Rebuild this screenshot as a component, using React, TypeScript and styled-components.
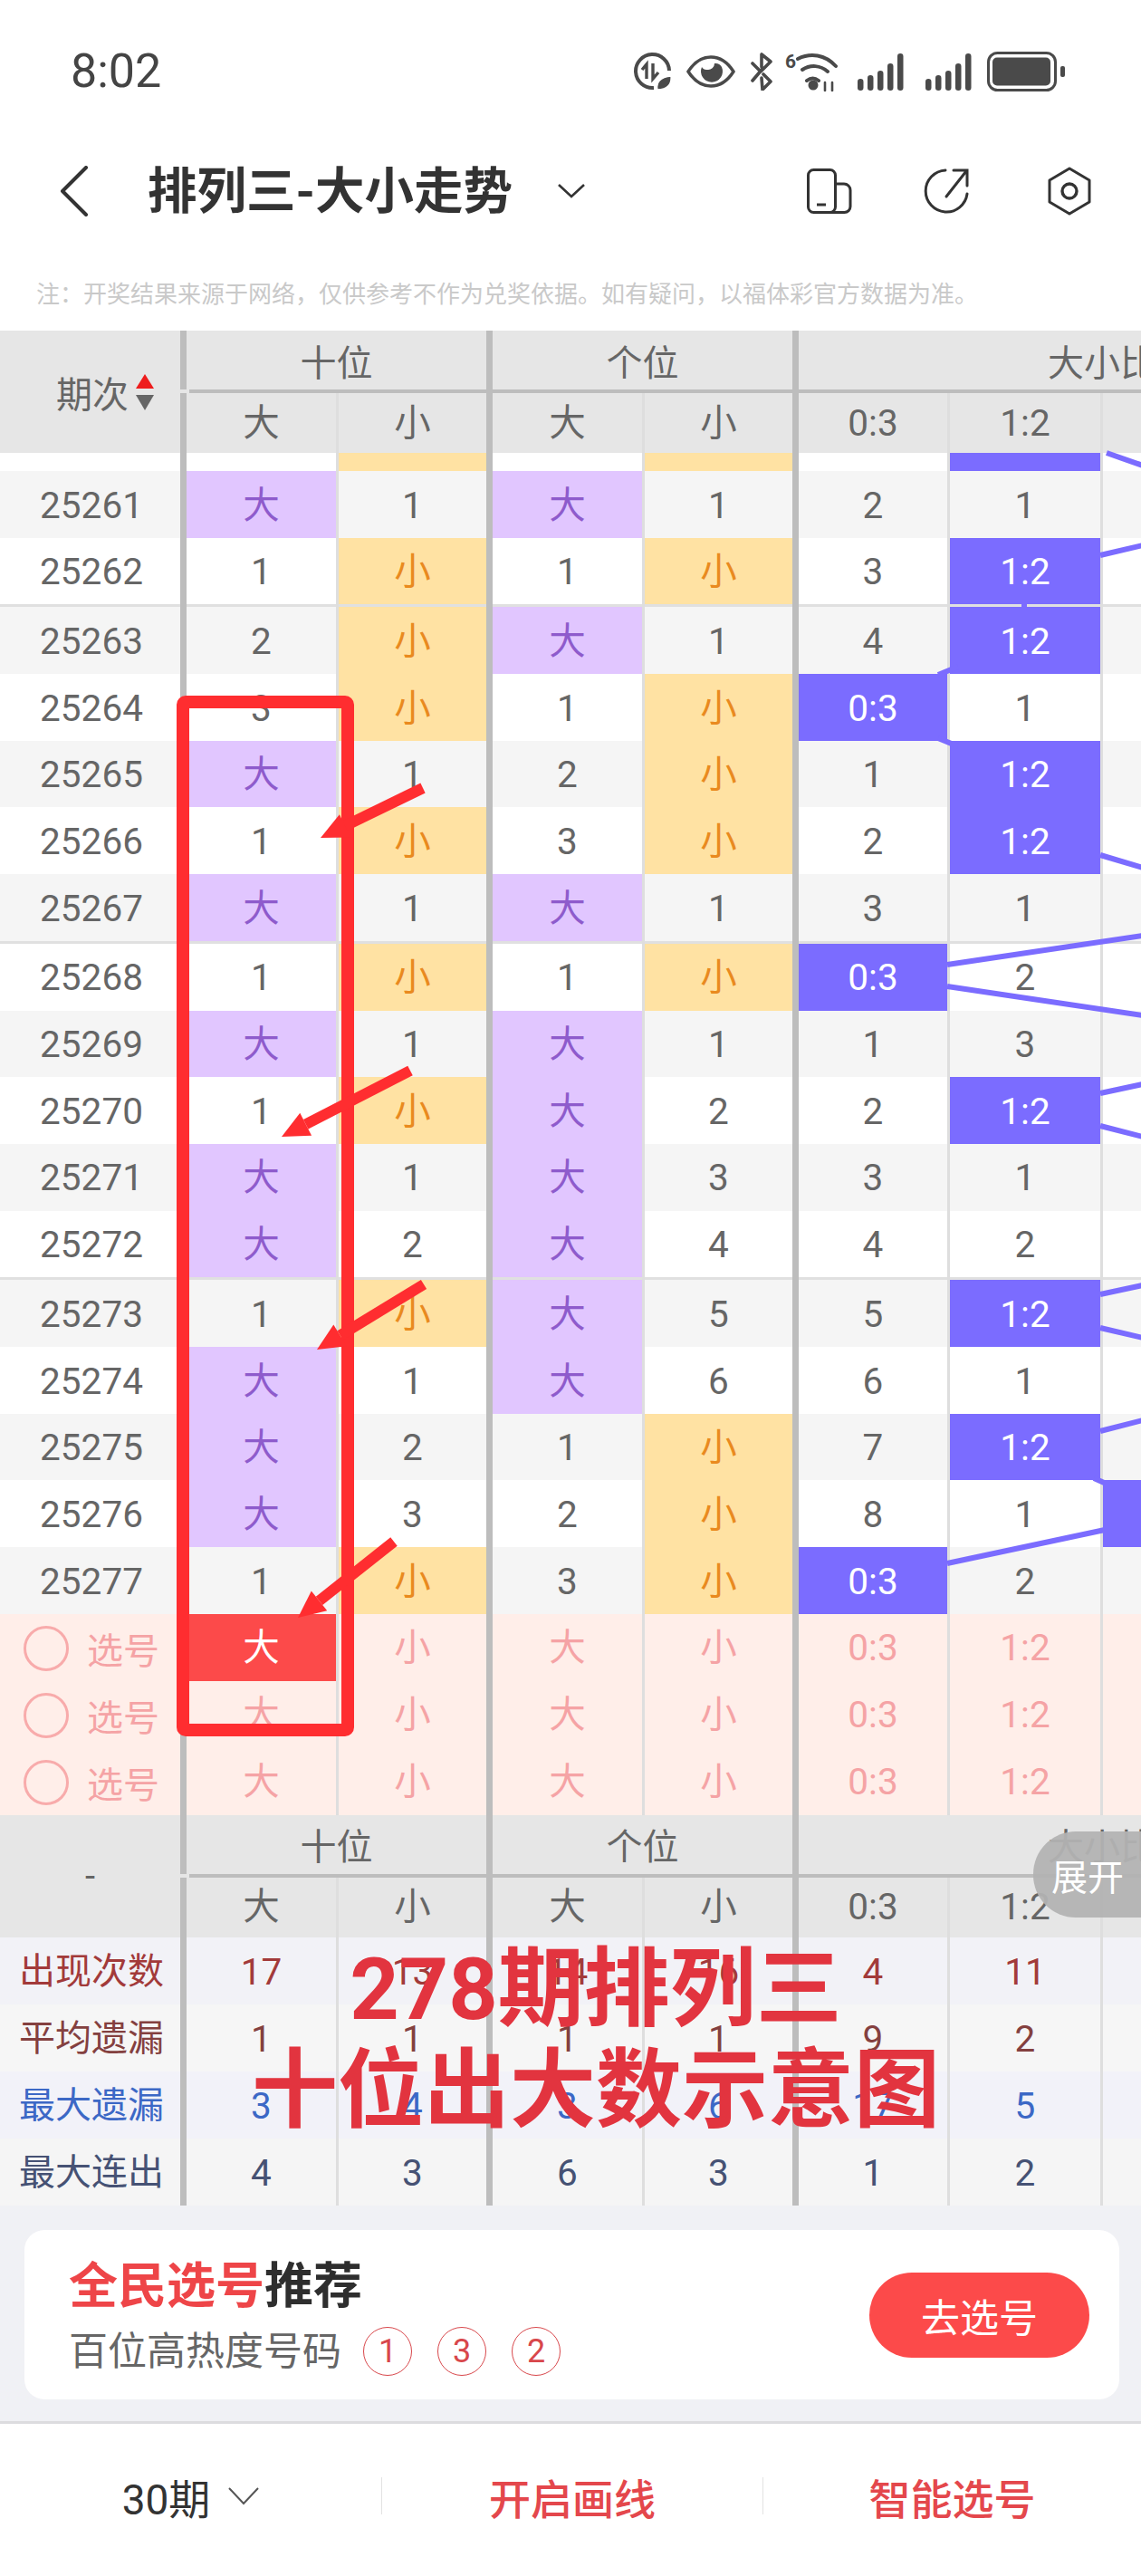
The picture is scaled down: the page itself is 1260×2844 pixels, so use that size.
import styled, { createGlobalStyle } from 'styled-components';

const FONT = 'Roboto, "Noto Sans CJK SC", sans-serif';
const COLUMNS = '172px 166px 172px 166px 171px 169px 45px';
const NOTE = '注\uFF1A开奖结果来源于网络\uFF0C仅供参考不作为兑奖依据。如有疑问\uFF0C以福体彩官方数据为准。';

const GlobalStyle = createGlobalStyle`
    html, body {
        margin: 0;
        padding: 0;
        background: #fff;
        font-family: ${FONT};
    }
`;

const Page = styled.div`
    position: relative;
    width: 1260px;
    height: 2844px;
    overflow: hidden;
    background: #fff;
    color: #666;
`;

const StatusBar = styled.div`
    height: 158px;
    display: flex;
    align-items: center;
    padding: 0 84px 0 78px;
    box-sizing: border-box;
    color: #444;
`;

const Clock = styled.div`
    font-size: 52px;
    line-height: 1;
    flex: 1;
`;

const StatusIcons = styled.div`
    display: flex;
    align-items: center;
`;

const NavBar = styled.div`
    height: 106px;
    display: flex;
    align-items: center;
    padding: 0 54px 0 66px;
    box-sizing: border-box;
    color: #333;
`;

const Title = styled.div`
    margin-left: 65px;
    font-size: 54.5px;
    font-weight: 700;
    line-height: 1;
`;

const NavIcons = styled.div`
    margin-left: auto;
    display: flex;
    align-items: center;
    gap: 79px;
    & > svg:last-child {
        margin-left: 7px;
    }
`;

const Note = styled.div`
    height: 101px;
    padding: 42px 0 0 40px;
    box-sizing: border-box;
    font-size: 26px;
    line-height: 38px;
    color: #c9c9c9;
    white-space: nowrap;
`;

const Head = styled.div`
    display: flex;
    background: #e6e6e6;
    color: #666;
    font-size: 40px;
`;

const HeadName = styled.div<{ $sort?: boolean }>`
    width: 199px;
    flex: none;
    display: flex;
    align-items: center;
    justify-content: ${({ $sort }) => ($sort ? 'flex-start' : 'center')};
    gap: 8px;
    padding-left: ${({ $sort }) => ($sort ? 62 : 0)}px;
    box-sizing: border-box;
`;

const HeadBody = styled.div`
    flex: 1;
    min-width: 0;
`;

const HeadGrid = styled.div<{ $height: number }>`
    display: grid;
    grid-template-columns: ${COLUMNS};
    height: ${({ $height }) => $height}px;
`;

const GroupCell = styled.div<{ $span: number; $pad?: number }>`
    grid-column: span ${({ $span }) => $span};
    border-left: 7px solid #bdbdbd;
    display: flex;
    align-items: center;
    justify-content: ${({ $pad }) => ($pad ? 'flex-start' : 'center')};
    padding-left: ${({ $pad }) => $pad ?? 0}px;
    white-space: nowrap;
    overflow: hidden;
`;

const GroupRule = styled.div`
    height: 4px;
    margin-left: 10px;
    background: #bdbdbd;
`;

const SortIcon = styled.svg`
    width: 20px;
    height: 40px;
    flex: none;
`;

const Row = styled.div<{ $height: number; $bg: string }>`
    display: grid;
    grid-template-columns: 199px ${COLUMNS};
    height: ${({ $height }) => $height}px;
    background: ${({ $bg }) => $bg};
    overflow: hidden;
    & > div {
        padding-top: 2px;
    }
`;

const TONES: Record<string, string> = {
    big: 'background: #e1c6ff; color: #8e5bcc;',
    small: 'background: #ffe2a3; color: #e98a1f;',
    ratio: 'background: #7b6cff; color: #fff;',
    picked: 'background: #fc4a4a; color: #fff;',
    rule: 'background: #e0e0e0;',
    plain: '',
};

const Cell = styled.div<{ $thick: boolean; $tone?: string; $color?: string }>`
    border-left: ${({ $thick }) => ($thick ? '7px solid #bdbdbd' : '3px solid #dedede')};
    display: flex;
    align-items: center;
    justify-content: center;
    font-size: 40.5px;
    line-height: 1;
    min-width: 0;
    color: ${({ $color }) => $color ?? 'inherit'};
    ${({ $tone }) => TONES[$tone ?? 'plain']}
`;

const NameCell = styled.div<{ $color?: string; $size?: number }>`
    display: flex;
    align-items: center;
    justify-content: center;
    padding-left: 3px;
    font-size: ${({ $size }) => $size ?? 40.5}px;
    line-height: 1;
    color: ${({ $color }) => $color ?? 'inherit'};
    white-space: nowrap;
`;

const PickLabel = styled.div`
    display: flex;
    align-items: center;
    gap: 20px;
    font-size: 40px;
    color: #f5a3a5;
    padding-left: 26px;
    white-space: nowrap;
`;

const Radio = styled.div`
    width: 50px;
    height: 50px;
    border: 3px solid #f8abab;
    border-radius: 50%;
    box-sizing: border-box;
`;

const Footer = styled.div`
    height: 241px;
    background: #f0f1f5;
    padding: 27px 24px 0 27px;
    box-sizing: border-box;
    border-bottom: 3px solid #dcdcdf;
`;

const Card = styled.div`
    height: 187px;
    background: #fff;
    border-radius: 22px;
    display: flex;
    align-items: center;
    padding: 0 33px 0 49px;
`;

const CardText = styled.div`
    flex: 1;
    display: flex;
    flex-direction: column;
    gap: 12px;
    padding-top: 6px;
`;

const CardTitle = styled.div`
    font-size: 54px;
    font-weight: 700;
    line-height: 62px;
    color: #2e2e2e;
`;

const Accent = styled.span`
    color: #ee4548;
`;

const CardSub = styled.div`
    display: flex;
    align-items: center;
    font-size: 43px;
    line-height: 56px;
    color: #666;
`;

const Hot = styled.span`
    width: 52px;
    height: 52px;
    margin-left: 28px;
    border: 1.5px solid #d8474b;
    border-radius: 50%;
    display: flex;
    align-items: center;
    justify-content: center;
    font-size: 36px;
    color: #d8474b;
    box-sizing: content-box;
    &:first-of-type {
        margin-left: 24px;
    }
`;

const GoButton = styled.div`
    width: 243px;
    height: 94px;
    border-radius: 47px;
    background: #fc4a4a;
    color: #fff;
    font-size: 43px;
    display: flex;
    align-items: center;
    justify-content: center;
`;

const BottomBar = styled.div`
    height: 167px;
    background: #fff;
    display: grid;
    grid-template-columns: 421px 421px 418px;
    align-items: center;
    padding-bottom: 8px;
    box-sizing: border-box;
`;

const BottomItem = styled.div<{ $divider?: boolean; $red?: boolean }>`
    height: 41px;
    display: flex;
    align-items: center;
    justify-content: center;
    gap: 20px;
    border-left: ${({ $divider }) => ($divider ? '1px solid #e2e2e2' : 'none')};
    font-size: 46px;
    font-weight: ${({ $red }) => ($red ? 500 : 400)};
    color: ${({ $red }) => ($red ? '#e4474c' : '#333')};
    white-space: nowrap;
`;

const ExpandTab = styled.div`
    position: absolute;
    left: 1141px;
    top: 2022px;
    width: 119px;
    height: 95px;
    border-radius: 47px 0 0 47px;
    background: rgba(178, 178, 178, 0.94);
    color: #fff;
    font-size: 40px;
    display: flex;
    align-items: center;
    padding-left: 20px;
    box-sizing: border-box;
`;

const Overlay = styled.svg`
    position: absolute;
    left: 0;
    top: 0;
    pointer-events: none;
`;

const Caption = styled.div`
    position: absolute;
    left: 0;
    top: 2141px;
    width: 1316px;
    text-align: center;
    font-size: 95px;
    font-weight: 700;
    line-height: 112px;
    color: #e2343f;
    white-space: nowrap;
`;

type RowData = [string, string, string, string, string, string, string, string?];

const ROWS: RowData[] = [
    ['25261', '大', '1', '大', '1', '2', '1'],
    ['25262', '1', '小', '1', '小', '3', '1:2'],
    ['25263', '2', '小', '大', '1', '4', '1:2'],
    ['25264', '3', '小', '1', '小', '0:3', '1'],
    ['25265', '大', '1', '2', '小', '1', '1:2'],
    ['25266', '1', '小', '3', '小', '2', '1:2'],
    ['25267', '大', '1', '大', '1', '3', '1'],
    ['25268', '1', '小', '1', '小', '0:3', '2'],
    ['25269', '大', '1', '大', '1', '1', '3'],
    ['25270', '1', '小', '大', '2', '2', '1:2'],
    ['25271', '大', '1', '大', '3', '3', '1'],
    ['25272', '大', '2', '大', '4', '4', '2'],
    ['25273', '1', '小', '大', '5', '5', '1:2'],
    ['25274', '大', '1', '大', '6', '6', '1'],
    ['25275', '大', '2', '1', '小', '7', '1:2'],
    ['25276', '大', '3', '2', '小', '8', '1', 'fill'],
    ['25277', '1', '小', '3', '小', '0:3', '2'],
];

const PICKS = ['大', '小', '大', '小', '0:3', '1:2', ''];
const SUBHEADS = ['大', '小', '大', '小', '0:3', '1:2', ''];

const STATS = [
    { label: '出现次数', bg: '#f2f2f7', color: '#a23a3a', values: ['17', '13', '14', '16', '4', '11'] },
    { label: '平均遗漏', bg: '#f6f6f6', color: '#84403f', values: ['1', '1', '1', '1', '9', '2'] },
    { label: '最大遗漏', bg: '#f2f2f9', color: '#3c68c6', values: ['3', '4', '3', '6', '17', '5'] },
    { label: '最大连出', bg: '#f5f5f5', color: '#465274', values: ['4', '3', '6', '3', '1', '2'] },
];

// purple trend lines between the highlighted ratio cells
const TREND = [
    [1222, 500, 1262, 514],
    [1215, 613, 1262, 602],
    [1036, 745, 1058, 736],
    [1036, 815, 1058, 824],
    [1131, 665, 1131, 672],
    [1215, 944, 1262, 958],
    [1046, 1065, 1262, 1033],
    [1046, 1089, 1262, 1121],
    [1215, 1207, 1262, 1197],
    [1215, 1243, 1262, 1255],
    [1215, 1429, 1262, 1419],
    [1215, 1466, 1262, 1477],
    [1215, 1580, 1262, 1568],
    [1208, 1632, 1226, 1640],
    [1046, 1726, 1220, 1689],
];

const ARROWS = [
    [467, 870, 354, 925],
    [453, 1182, 311, 1255],
    [468, 1418, 350, 1490],
    [435, 1702, 329, 1786],
];

const SIGNAL = [13, 17, 22, 30, 41];

const toneOf = (value: string) => {
    if (value === '大') return 'big';
    if (value === '小') return 'small';
    if (value === 'fill' || value.includes(':')) return 'ratio';
    return 'plain';
};

const isThick = (index: number) => index % 2 === 0 && index < 5;

function ArrowShape({ from }: { from: number[] }) {
    const [x1, y1, x2, y2] = from;
    const len = Math.hypot(x2 - x1, y2 - y1);
    const ux = (x2 - x1) / len;
    const uy = (y2 - y1) / len;
    const bx = x2 - ux * 30;
    const by = y2 - uy * 30;
    const head = [
        `${x2},${y2}`,
        `${bx - uy * 14},${by + ux * 14}`,
        `${bx + uy * 14},${by - ux * 14}`,
    ].join(' ');
    return (
        <g fill="#ff2d30" stroke="#ff2d30">
            <line x1={x1} y1={y1} x2={bx} y2={by} strokeWidth={12} />
            <polygon points={head} stroke="none" />
        </g>
    );
}

function SignalBars({ style }: { style: React.CSSProperties }) {
    return (
        <svg width="51" height="42" viewBox="0 0 51 42" style={style}>
            {SIGNAL.map((height, i) => (
                <rect key={i} x={i * 11} y={42 - height} width="6.5" height={height} rx="3.2" fill="#4a4a4a" />
            ))}
        </svg>
    );
}

function StatusGlyphs() {
    return (
        <StatusIcons>
            <svg width="42" height="42" viewBox="0 0 42 42" fill="none" stroke="#4a4a4a" strokeWidth="4">
                <path d="M22 39A18.5 18.5 0 1 1 39 20" />
                <path d="M14 29V13l-5 6M21 12v17l6-7" strokeWidth="3.4" />
                <path d="M26 41c-2-8 3-14 15-15 1 9-4 15-15 15z" fill="#4a4a4a" stroke="#fff" strokeWidth="1.5" />
            </svg>
            <svg width="54" height="36" viewBox="0 0 54 36" style={{ marginLeft: 16 }}>
                <path d="M2 18C9 7 18 2 27 2s18 5 25 16c-7 11-16 16-25 16S9 29 2 18z" fill="none" stroke="#4a4a4a" strokeWidth="3.5" />
                <path d="M17 13a12 12 0 1 0 22 0 8 8 0 0 0-8-4 7 7 0 0 1-8 7 6 6 0 0 1-6-3z" fill="#4a4a4a" />
            </svg>
            <svg width="26" height="42" viewBox="0 0 26 42" fill="none" stroke="#4a4a4a" strokeWidth="3.6" strokeLinecap="round" strokeLinejoin="round" style={{ marginLeft: 16 }}>
                <path d="M3 12l9 9 11-11-10-8v14M3 31l11-13" />
                <path d="M15 24l8 8-9 9-1-13" />
            </svg>
            <svg width="58" height="44" viewBox="0 0 58 44" fill="none" stroke="#4a4a4a" strokeWidth="4" strokeLinecap="round" style={{ marginLeft: 13 }}>
                <path d="M14 8C28 1 44 3 56 16M19 20c9-6 20-5 28 2M24 32c4-3 9-3 13 0" />
                <circle cx="31" cy="37" r="5.5" fill="#4a4a4a" stroke="none" />
                <path d="M44 43v-9M52 43v-9" strokeWidth="2.6" />
                <text x="0" y="18" fontSize="21" fontWeight="700" fill="#4a4a4a" stroke="none" fontFamily="Roboto">6</text>
            </svg>
            <SignalBars style={{ marginLeft: 22 }} />
            <SignalBars style={{ marginLeft: 24 }} />
            <svg width="86" height="44" viewBox="0 0 86 44" fill="none" style={{ marginLeft: 17 }}>
                <rect x="1.5" y="1.5" width="74" height="41" rx="10" stroke="#4a4a4a" strokeWidth="3" />
                <rect x="6" y="6.5" width="64" height="31" rx="5" fill="#4a4a4a" />
                <rect x="81" y="16" width="5" height="12" rx="2" fill="#4a4a4a" />
            </svg>
        </StatusIcons>
    );
}

function NavGlyphs() {
    return (
        <NavIcons>
            <svg width="50" height="50" viewBox="0 0 50 50" fill="none" stroke="#333" strokeWidth="3">
                <rect x="1.5" y="1.5" width="30" height="47" rx="6" />
                <path d="M32 17h9a7 7 0 0 1 7 7v18a6.5 6.5 0 0 1-6.5 6.5H26" />
                <path d="M11 40h10" />
            </svg>
            <svg width="50" height="50" viewBox="0 0 50 50" fill="none" stroke="#333" strokeWidth="3" strokeLinecap="round">
                <path d="M24 2A23 23 0 1 0 48 28" />
                <path d="M25 31L47 3M33 2h15v17" />
            </svg>
            <svg width="50" height="54" viewBox="0 0 50 54" fill="none" stroke="#333" strokeWidth="3" strokeLinejoin="round">
                <path d="M25 2l22 13v24L25 52 3 39V15z" />
                <circle cx="25" cy="27" r="8" strokeWidth="3.4" />
            </svg>
        </NavIcons>
    );
}

function TableHead({ name, sort }: { name: string; sort?: boolean }) {
    return (
        <Head>
            <HeadName $sort={sort}>
                {name}
                {sort && (
                    <SortIcon viewBox="0 0 20 40">
                        <path d="M10 0L20 16H0z" fill="#ee1c1c" />
                        <path d="M0 23h20L10 40z" fill="#666" />
                    </SortIcon>
                )}
            </HeadName>
            <HeadBody>
                <HeadGrid $height={65}>
                    <GroupCell $span={2}>十位</GroupCell>
                    <GroupCell $span={2}>个位</GroupCell>
                    <GroupCell $span={3} $pad={275}>大小比</GroupCell>
                </HeadGrid>
                <GroupRule />
                <HeadGrid $height={66}>
                    {SUBHEADS.map((label, i) => (
                        <Cell key={i} $thick={isThick(i)}>{label}</Cell>
                    ))}
                </HeadGrid>
            </HeadBody>
        </Head>
    );
}

export default function App() {
    return (
        <Page>
            <GlobalStyle />
            <StatusBar>
                <Clock>8:02</Clock>
                <StatusGlyphs />
            </StatusBar>
            <NavBar>
                <svg width="32" height="56" viewBox="0 0 32 56" fill="none" stroke="#333" strokeWidth="4" strokeLinecap="round" strokeLinejoin="round">
                    <path d="M29 2L3 28l26 26" />
                </svg>
                <Title>排列三-大小走势</Title>
                <svg width="30" height="16" viewBox="0 0 30 16" fill="none" stroke="#333" strokeWidth="2.6" style={{ marginLeft: 50 }}>
                    <path d="M1 1l14 13L29 1" />
                </svg>
                <NavGlyphs />
            </NavBar>
            <Note>{NOTE}</Note>

            <TableHead name="期次" sort />

            <Row $height={20} $bg="#fff">
                <NameCell />
                {['', '小', '', '小', '', '1:2', ''].map((value, i) => (
                    <Cell key={i} $thick={isThick(i)} $tone={toneOf(value)} />
                ))}
            </Row>
            {ROWS.map((row, r) => (
                <div key={row[0]}>
                    <Row $height={73.7} $bg={r % 2 === 0 ? '#f5f5f5' : '#fff'}>
                        <NameCell>{row[0]}</NameCell>
                        {[1, 2, 3, 4, 5, 6, 7].map((col, i) => {
                            const value = row[col] ?? '';
                            return (
                                <Cell key={col} $thick={isThick(i)} $tone={toneOf(value)}>
                                    {value === 'fill' ? '' : value}
                                </Cell>
                            );
                        })}
                    </Row>
                    {r % 5 === 1 && r < 15 && (
                        <Row $height={3} $bg="#e0e0e0">
                            <NameCell />
                            {PICKS.map((_, i) => (
                                <Cell key={i} $thick={isThick(i)} $tone="rule" />
                            ))}
                        </Row>
                    )}
                </div>
            ))}

            {[0, 1, 2].map((r) => (
                <Row key={r} $height={74} $bg="#ffeee9">
                    <PickLabel>
                        <Radio />
                        选号
                    </PickLabel>
                    {PICKS.map((value, i) =>
                        r === 0 && i === 0 ? (
                            <Cell key={i} $thick $tone="picked">{value}</Cell>
                        ) : (
                            <Cell key={i} $thick={isThick(i)} $color="#f5a3a5">{value}</Cell>
                        )
                    )}
                </Row>
            ))}

            <TableHead name="-" />

            {STATS.map((stat) => (
                <Row key={stat.label} $height={74.2} $bg={stat.bg}>
                    <NameCell $color={stat.color} $size={40}>{stat.label}</NameCell>
                    {[...stat.values, ''].map((value, i) => (
                        <Cell key={i} $thick={isThick(i)} $color={stat.color}>{value}</Cell>
                    ))}
                </Row>
            ))}

            <Footer>
                <Card>
                    <CardText>
                        <CardTitle>
                            <Accent>全民选号</Accent>推荐
                        </CardTitle>
                        <CardSub>
                            百位高热度号码
                            <Hot>1</Hot>
                            <Hot>3</Hot>
                            <Hot>2</Hot>
                        </CardSub>
                    </CardText>
                    <GoButton>去选号</GoButton>
                </Card>
            </Footer>
            <BottomBar>
                <BottomItem>
                    30期
                    <svg width="34" height="20" viewBox="0 0 34 20" fill="none" stroke="#555" strokeWidth="2">
                        <path d="M1 1l16 17L33 1" />
                    </svg>
                </BottomItem>
                <BottomItem $divider $red>开启画线</BottomItem>
                <BottomItem $divider $red>智能选号</BottomItem>
            </BottomBar>

            <ExpandTab>展开</ExpandTab>

            <Overlay width="1260" height="2844" viewBox="0 0 1260 2844">
                {TREND.map(([x1, y1, x2, y2], i) => (
                    <line key={i} x1={x1} y1={y1} x2={x2} y2={y2} stroke="#7b6cff" strokeWidth={6} />
                ))}
                <rect x="1218" y="1634" width="42" height="74" fill="#7b6cff" />
                <rect x="202" y="775" width="182" height="1135" rx="3" fill="none" stroke="#ff2d30" strokeWidth="14" />
                {ARROWS.map((arrow, i) => (
                    <ArrowShape key={i} from={arrow} />
                ))}
            </Overlay>
            <Caption>
                278期排列三
                <br />
                十位出大数示意图
            </Caption>
        </Page>
    );
}
